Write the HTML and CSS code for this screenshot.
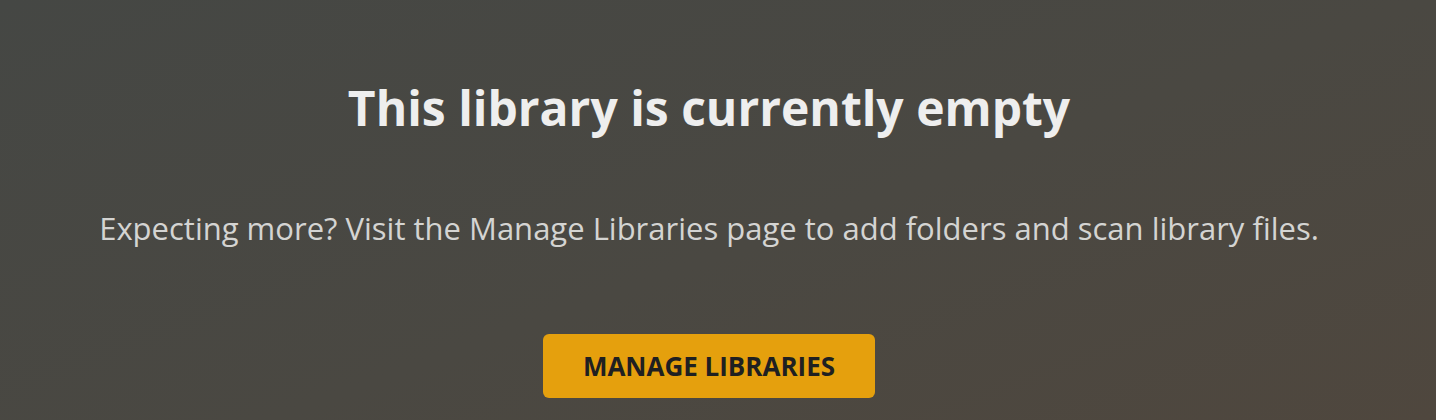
FILE: index.html
```html
<!DOCTYPE html>
<html lang="en">
<head>
    <meta charset="UTF-8">
    <meta name="viewport" content="width=device-width, initial-scale=1.0">
    <title>Library</title>
    <link rel="stylesheet" href="styles.css">
</head>
<body>
    <div class="empty-state">
        <h1 class="empty-title">This library is currently empty</h1>
        <p class="empty-text">Expecting more? Visit the Manage Libraries page to add folders and scan library files.</p>
        <button class="manage-button">Manage Libraries</button>
    </div>
</body>
</html>
```

FILE: styles.css
```css
html, body {
    height: 100%;
}
body {
    font-family: 'Open Sans', sans-serif;
    margin: 0;
    padding: 0;
    color: #eeeeee;
    background: linear-gradient(160deg, #454744 0%, #4a4842 55%, #4f473e 100%);
    overflow: hidden;
}
.empty-state {
    display: flex;
    flex-direction: column;
    align-items: center;
    padding: 76px 18px 0 0;
}
.empty-title {
    margin: 0;
    font-size: 48px;
    font-weight: 700;
    line-height: 64px;
    color: #eeeeee;
}
.empty-text {
    margin: 68px 0 0;
    font-size: 31px;
    line-height: 40px;
    color: #d4d4d2;
}
.manage-button {
    margin-top: 86px;
    width: 332px;
    height: 64px;
    border: none;
    border-radius: 6px;
    background-color: #e5a00d;
    color: #1f2021;
    font-family: 'Open Sans', sans-serif;
    font-size: 26px;
    font-weight: 700;
    text-transform: uppercase;
    cursor: pointer;
}
```
